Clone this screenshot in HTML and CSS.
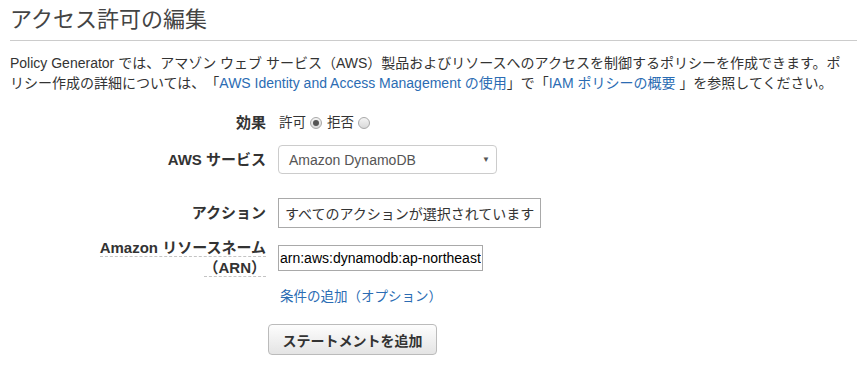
FILE: index.html
```html
<!DOCTYPE html>
<html lang="ja">
<head>
  <meta charset="UTF-8" />
  <title>アクセス許可の編集</title>
  <link rel="stylesheet" href="styles.css">
</head>
<body>
  <h1>アクセス許可の編集</h1>

  <p class="intro">Policy Generator では、アマゾン ウェブ サービス（AWS）製品およびリソースへのアクセスを制御するポリシーを作成できます。ポ<br>リシー作成の詳細については、「<a href="#">AWS Identity and Access Management の使用</a>」で「<a href="#">IAM ポリシーの概要 </a>」を参照してください。</p>

  <div class="form">
    <div class="row row-effect">
      <label class="label">効果</label>
      <div class="radios">
        <span>許可</span><span class="radio checked"></span>
        <span>拒否</span><span class="radio"></span>
      </div>
    </div>

    <div class="row row-service">
      <label class="label">AWS サービス</label>
      <div class="select">
        <span>Amazon DynamoDB</span>
        <span class="arrow">▼</span>
      </div>
    </div>

    <div class="row row-action">
      <label class="label">アクション</label>
      <input class="text action" type="text" value="すべてのアクションが選択されています" readonly>
    </div>

    <div class="row row-arn">
      <label class="label"><span class="hint">Amazon リソースネーム</span><br><span class="hint">（ARN）</span></label>
      <input class="text arn" type="text" value="arn:aws:dynamodb:ap-northeast-1:*:table/*" readonly>
    </div>

    <div class="row row-link">
      <span></span>
      <a href="#" class="add-cond">条件の追加（オプション）</a>
    </div>

    <div class="row row-button">
      <span></span>
      <button class="btn">ステートメントを追加</button>
    </div>
  </div>
</body>
</html>
```

FILE: styles.css
```css
body {
  margin: 0;
  padding: 0 10px;
  background-color: #fff;
  color: #333;
  font-family: "Liberation Sans", "Noto Sans CJK JP", sans-serif;
  text-spacing-trim: space-all;
}

h1 {
  margin: 0;
  padding: 6px 0 6px;
  font-size: 22px;
  line-height: 28px;
  font-weight: normal;
  color: #444;
  border-bottom: 1px solid #ccc;
}

.intro {
  margin: 12px 0 0;
  font-size: 14px;
  line-height: 20px;
  white-space: nowrap;
}

a {
  color: #2b6cb3;
  text-decoration: none;
}

.row {
  display: grid;
  grid-template-columns: 256px 1fr;
  column-gap: 12px;
  align-items: center;
}

.label {
  text-align: right;
  font-weight: bold;
  font-size: 15px;
  line-height: 20px;
  color: #333;
}

.row-effect { margin-top: 20px; }
.row-service { margin-top: 12px; }
.row-action { margin-top: 24px; }
.row-arn { margin-top: 10px; }
.row-link { margin-top: 9px; }
.row-button { margin-top: 17px; }

.radios {
  display: flex;
  align-items: center;
  font-size: 13.5px;
  line-height: 20px;
}

.radios span:first-child {
  margin-left: 1px;
}

.radio {
  width: 10px;
  height: 10px;
  margin: 0 5px 0 4px;
  border: 1px solid #a8a8a8;
  border-radius: 50%;
  background: linear-gradient(#f4f4f4, #d9d9d9);
  position: relative;
}

.radio.checked::after {
  content: "";
  position: absolute;
  left: 2px;
  top: 2px;
  width: 6px;
  height: 6px;
  border-radius: 50%;
  background-color: #555;
}

.select {
  width: 201px;
  height: 27px;
  padding: 0 6px 0 10px;
  border: 1px solid #ccc;
  border-radius: 4px;
  display: flex;
  align-items: center;
  justify-content: space-between;
  font-size: 14px;
  color: #555;
}

.arrow {
  font-size: 8px;
  color: #555;
}

.text {
  box-sizing: border-box;
  margin: 0;
  font-family: "Liberation Sans", "Noto Sans CJK JP", sans-serif;
  font-size: 14px;
  color: #222;
  background-color: #fff;
  border: 1px solid #a9a9a9;
  border-radius: 0;
  outline: none;
}

.action {
  width: 263px;
  height: 30px;
  padding: 0 6px;
  color: #333;
}

.arn {
  width: 205px;
  height: 26px;
  padding: 0 1px;
  color: #000;
}

.hint {
  border-bottom: 1px dashed #c4c4c4;
}

.add-cond {
  margin-left: 2px;
  font-size: 13.5px;
  line-height: 20px;
}

.btn {
  justify-self: start;
  margin-left: -10px;
  width: 169px;
  height: 31px;
  font-family: "Liberation Sans", "Noto Sans CJK JP", sans-serif;
  font-size: 14px;
  font-weight: bold;
  color: #333;
  border: 1px solid #bbb;
  border-radius: 4px;
  background: linear-gradient(#fdfdfd, #e4e4e4);
  cursor: pointer;
}
```
